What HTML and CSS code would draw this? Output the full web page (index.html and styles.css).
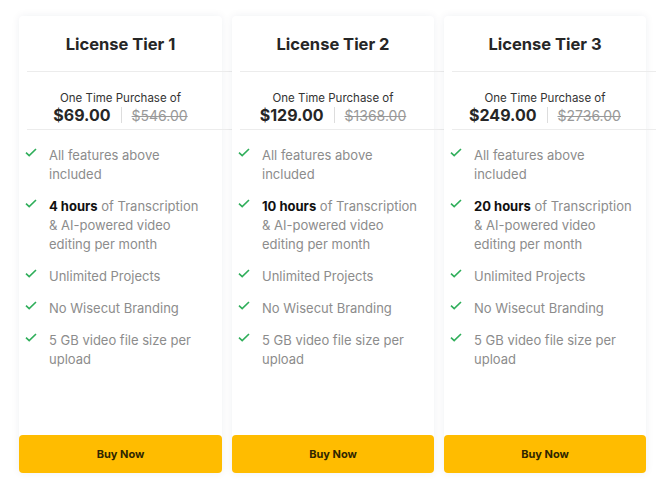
FILE: index.html
```html
<!DOCTYPE html>
<html>
<head>
<meta charset="utf-8">
<link rel="stylesheet" href="styles.css">
</head>
<body>
<div class="tiers">
  <div class="card">
    <h2 class="title">License Tier 1</h2>
    <div class="rule"></div>
    <div class="price">
      <div class="once">One Time Purchase of</div>
      <div class="amounts"><span class="now">$69.00</span><span class="sep"></span><span class="was">$546.00</span></div>
    </div>
    <div class="rule"></div>
    <ul class="features">
      <li><svg class="check" viewBox="0 0 12 9"><path d="M1 4.6 L4.2 7.6 L11 1"/></svg><span>All features above included</span></li>
      <li><svg class="check" viewBox="0 0 12 9"><path d="M1 4.6 L4.2 7.6 L11 1"/></svg><span><b>4 hours</b> of Transcription &amp; AI-powered video editing per month</span></li>
      <li><svg class="check" viewBox="0 0 12 9"><path d="M1 4.6 L4.2 7.6 L11 1"/></svg><span>Unlimited Projects</span></li>
      <li><svg class="check" viewBox="0 0 12 9"><path d="M1 4.6 L4.2 7.6 L11 1"/></svg><span>No Wisecut Branding</span></li>
      <li><svg class="check" viewBox="0 0 12 9"><path d="M1 4.6 L4.2 7.6 L11 1"/></svg><span>5 GB video file size per upload</span></li>
    </ul>
    <button class="buy">Buy Now</button>
  </div>
  <div class="card">
    <h2 class="title">License Tier 2</h2>
    <div class="rule"></div>
    <div class="price">
      <div class="once">One Time Purchase of</div>
      <div class="amounts"><span class="now">$129.00</span><span class="sep"></span><span class="was">$1368.00</span></div>
    </div>
    <div class="rule"></div>
    <ul class="features">
      <li><svg class="check" viewBox="0 0 12 9"><path d="M1 4.6 L4.2 7.6 L11 1"/></svg><span>All features above included</span></li>
      <li><svg class="check" viewBox="0 0 12 9"><path d="M1 4.6 L4.2 7.6 L11 1"/></svg><span><b>10 hours</b> of Transcription &amp; AI-powered video editing per month</span></li>
      <li><svg class="check" viewBox="0 0 12 9"><path d="M1 4.6 L4.2 7.6 L11 1"/></svg><span>Unlimited Projects</span></li>
      <li><svg class="check" viewBox="0 0 12 9"><path d="M1 4.6 L4.2 7.6 L11 1"/></svg><span>No Wisecut Branding</span></li>
      <li><svg class="check" viewBox="0 0 12 9"><path d="M1 4.6 L4.2 7.6 L11 1"/></svg><span>5 GB video file size per upload</span></li>
    </ul>
    <button class="buy">Buy Now</button>
  </div>
  <div class="card">
    <h2 class="title">License Tier 3</h2>
    <div class="rule"></div>
    <div class="price">
      <div class="once">One Time Purchase of</div>
      <div class="amounts"><span class="now">$249.00</span><span class="sep"></span><span class="was">$2736.00</span></div>
    </div>
    <div class="rule"></div>
    <ul class="features">
      <li><svg class="check" viewBox="0 0 12 9"><path d="M1 4.6 L4.2 7.6 L11 1"/></svg><span>All features above included</span></li>
      <li><svg class="check" viewBox="0 0 12 9"><path d="M1 4.6 L4.2 7.6 L11 1"/></svg><span><b>20 hours</b> of Transcription &amp; AI-powered video editing per month</span></li>
      <li><svg class="check" viewBox="0 0 12 9"><path d="M1 4.6 L4.2 7.6 L11 1"/></svg><span>Unlimited Projects</span></li>
      <li><svg class="check" viewBox="0 0 12 9"><path d="M1 4.6 L4.2 7.6 L11 1"/></svg><span>No Wisecut Branding</span></li>
      <li><svg class="check" viewBox="0 0 12 9"><path d="M1 4.6 L4.2 7.6 L11 1"/></svg><span>5 GB video file size per upload</span></li>
    </ul>
    <button class="buy">Buy Now</button>
  </div>
</div>
</body>
</html>
```
FILE: styles.css
```css
* { box-sizing: border-box; }
html, body { margin: 0; background: #fff; }
body {
  font-family: "Inter", "Lato", sans-serif;
  color: #2b2b2b;
  width: 667px;
  height: 484px;
  overflow: hidden;
}
.tiers {
  display: grid;
  grid-template-columns: 203px 202px 202px;
  column-gap: 10px;
  padding: 16px 0 0 19px;
  height: 474px;
}
.card {
  background: #fff;
  display: flex;
  flex-direction: column;
  box-shadow: 0 0 9px rgba(30, 40, 80, 0.07);
  border-radius: 4px;
  height: 457px;
}
.title {
  margin: 0;
  padding: 18px 0 17px;
  font-size: 16.5px;
  line-height: 20px;
  font-weight: 700;
  text-align: center;
  color: #262626;
}
.rule {
  height: 1px;
  background: #ececec;
  margin: 0 -10px 0 8px;
}
.price {
  padding: 19px 0 4px;
  text-align: center;
}
.once {
  font-size: 11.5px;
  line-height: 14px;
  color: #333;
}
.amounts {
  display: flex;
  justify-content: center;
  align-items: center;
  height: 20px;
}
.now {
  font-size: 16px;
  font-weight: 700;
  color: #262626;
}
.sep {
  width: 1px;
  height: 16px;
  background: #ddd;
  margin: 0 10px;
}
.was {
  font-size: 14px;
  color: #999;
  text-decoration: line-through;
}
.features {
  list-style: none;
  margin: 0;
  padding: 16px 0 0 6px;
  display: flex;
  flex-direction: column;
  gap: 13px;
}
.features li {
  display: flex;
  align-items: flex-start;
  font-size: 13px;
  line-height: 19px;
  color: #8c8c8c;
}
.features span { max-width: 159px; }
.features b { color: #111; font-weight: 700; }
.check {
  flex: none;
  width: 12px;
  height: 9px;
  margin: 2px 12px 0 0;
  fill: none;
  stroke: #2fae5a;
  stroke-width: 1.6;
}
.buy {
  margin-top: auto;
  height: 38px;
  border: 0;
  border-radius: 4px;
  background: #ffbc00;
  color: #2f2600;
  font-family: inherit;
  font-size: 11px;
  font-weight: 700;
  cursor: pointer;
}
```
